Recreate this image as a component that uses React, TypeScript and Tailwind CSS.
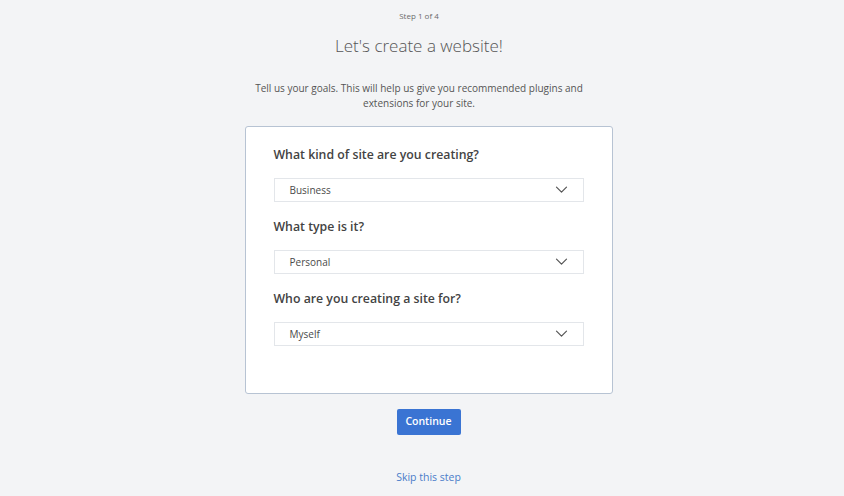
import {useState} from "react";

type SelectProps = {
    label: string
    value: string
    options: string[]
    onChange: (v: string) => void
}

const Chevron = () => (
    <svg width="13" height="8" viewBox="0 0 13 8" fill="none">
        <polyline points="1.5,1.2 6.5,6.2 11.5,1.2" stroke="#555" strokeWidth="1.2" strokeLinecap="round" strokeLinejoin="round"/>
    </svg>
)

const Question = ({label, value, options, onChange}: SelectProps) => {
    const next = () => onChange(options[(options.indexOf(value) + 1) % options.length])
    return (
        <div className="flex flex-col">
            <h2 className="text-[12.3px] leading-[20px] font-semibold text-[#434343]">{label}</h2>
            <button
                onClick={next}
                className="mt-[13px] h-[24px] border border-[#e3e6ea] bg-white flex items-center justify-between pl-[15px] pr-[15px] text-left"
            >
                <span className="text-[10px] text-[#4a4a4a]">{value}</span>
                <Chevron/>
            </button>
        </div>
    )
}

const App = () => {
    const [kind, setKind] = useState('Business')
    const [type, setType] = useState('Personal')
    const [who, setWho] = useState('Myself')

    return (
        <div className="min-h-[496px] bg-[#f3f4f6] flex flex-col items-center" style={{fontFamily: '"Open Sans", sans-serif'}}>
            <p className="mt-[11px] mr-[6px] text-[8px] leading-[10px] text-[#6b6b6b]">Step 1 of 4</p>
            <h1 className="mt-[13px] mr-[6px] text-[17px] leading-[24px] font-light text-[#555]">Let's create a website!</h1>
            <p className="mt-[23px] mr-[6px] w-[336px] text-center text-[10px] leading-[15px] text-[#555]">
                Tell us your goals. This will help us give you recommended plugins and extensions for your site.
            </p>
            <div className="mt-[15px] ml-[13px] w-[368px] bg-white border border-[#b7c3d3] rounded-[3px] pt-[18px] pb-[47px] px-[28px] flex flex-col gap-[15px]">
                <Question label="What kind of site are you creating?" value={kind} options={['Business', 'Blog', 'Store']} onChange={setKind}/>
                <Question label="What type is it?" value={type} options={['Personal', 'Company']} onChange={setType}/>
                <Question label="Who are you creating a site for?" value={who} options={['Myself', 'A client']} onChange={setWho}/>
            </div>
            <button className="mt-[15px] ml-[13px] w-[64px] h-[26px] bg-[#3a74d3] text-white text-[10.5px] font-semibold rounded-[2px]">
                Continue
            </button>
            <button className="mt-[35px] ml-[13px] text-[10.5px] text-[#4a7cc9]">Skip this step</button>
        </div>
    );
};

export default App;
